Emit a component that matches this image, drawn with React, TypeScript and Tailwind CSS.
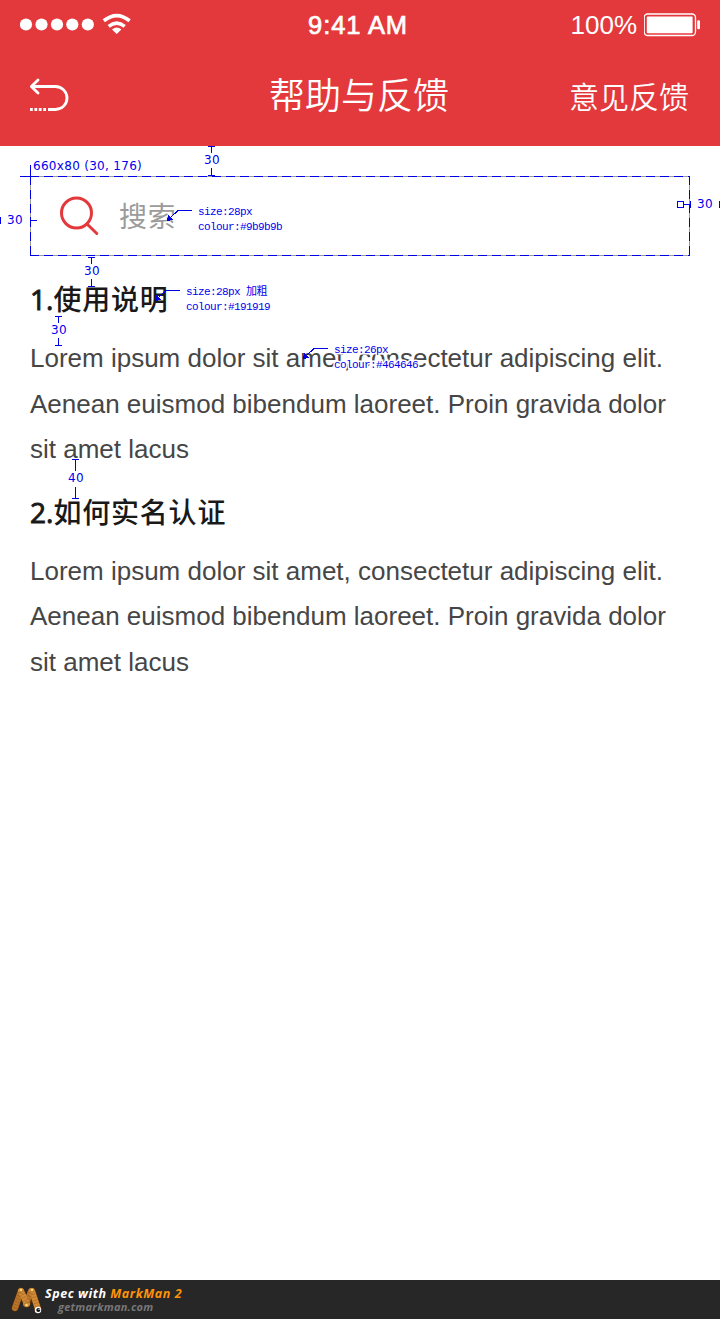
import type { ReactNode } from "react";

const CJK = "font-['Open_Sans','Noto_Sans_CJK_SC',sans-serif]";

function Dim({ x, y, children }: { x: number; y: number; children: ReactNode }) {
  return (
    <span
      className="absolute whitespace-nowrap font-['DejaVu_Sans',sans-serif] text-[12px] leading-[14px] tracking-[0.3px] text-[#0000f0]"
      style={{ left: x, top: y }}
    >
      {children}
    </span>
  );
}

function Note({ x, y, lines }: { x: number; y: number; lines: string[] }) {
  return (
    <div
      className="absolute whitespace-pre font-['Liberation_Mono','Noto_Sans_CJK_SC',monospace] text-[11px] leading-[15px] tracking-[-0.6px] text-[#0000f0] [paint-order:stroke] [-webkit-text-stroke:3px_#fff]"
      style={{ left: x, top: y }}
    >
      {lines.map((line) => (
        <div key={line}>{line}</div>
      ))}
    </div>
  );
}

function StatusBar() {
  return (
    <div className="flex h-12 items-center pt-0.5">
      <div className="flex flex-1 items-center pl-5">
        <svg width="112" height="24" viewBox="0 0 112 24" fill="#fff">
          <circle cx="6" cy="11.5" r="6.1" />
          <circle cx="21.5" cy="11.5" r="6.1" />
          <circle cx="37" cy="11.5" r="6.1" />
          <circle cx="52.3" cy="11.5" r="6.1" />
          <circle cx="67.8" cy="11.5" r="6.1" />
          <path d="M83.8 7.8Q96.7-2.5 109.6 7.8" fill="none" stroke="#fff" strokeWidth="3.7" />
          <path d="M88.7 13.3Q96.7 6.9 104.7 13.3" fill="none" stroke="#fff" strokeWidth="3.5" />
          <path d="M92 16.6Q96.7 12.6 101.4 16.6L96.7 21Z" />
        </svg>
      </div>
      <span className="-mt-px -translate-x-[2px] font-['Liberation_Sans',sans-serif] text-[25.5px] leading-6 tracking-[0.9px] text-white [-webkit-text-stroke:0.7px_#fff]">
        9:41 AM
      </span>
      <div className="flex flex-1 items-center justify-end gap-[7px] pr-5">
        <span className="font-['Liberation_Sans',sans-serif] text-[26px] leading-6 text-white">100%</span>
        <svg width="56" height="24" viewBox="0 0 56 24" fill="#fff">
          <rect x="0.2" y="1" width="51.3" height="21.5" rx="3.5" fill="none" stroke="#fff" strokeWidth="1.3" />
          <rect x="2.8" y="3.4" width="45.8" height="16.8" rx="1" />
          <rect x="53.2" y="7.3" width="2.8" height="9" rx="1.2" />
        </svg>
      </div>
    </div>
  );
}

function NavBar() {
  return (
    <div className="flex h-24 items-center px-[30px] text-white">
      <div className="flex-1">
        <svg className="-mt-0.5" width="39" height="34" viewBox="0 0 39 34" fill="none" stroke="#fff" strokeWidth="2.8">
          <path d="M8 2L1.4 8.5L8 15" strokeLinecap="round" strokeLinejoin="round" />
          <path d="M2 8.5H25.5A11.4 11.4 0 0 1 25.5 31.5H18" />
          <path d="M0 31.5H17" strokeDasharray="2.8 1.6" />
        </svg>
      </div>
      <h1 className={`${CJK} -translate-x-px text-[36px] font-[350] leading-[54px]`}>帮助与反馈</h1>
      <span className={`${CJK} flex-1 -translate-x-px text-right text-[30px] font-[350] leading-[45px]`}>意见反馈</span>
    </div>
  );
}

function Section({ title, className }: { title: string; className: string }) {
  return (
    <section className={className}>
      <h2 className={`${CJK} text-[28px] font-medium leading-[42px] tracking-[0.6px] text-[#191919]`}>
        <span className="tracking-normal [-webkit-text-stroke:0.9px_#191919]">{title.slice(0, 2)}</span>
        <span className="tracking-[0.8px]">{title.slice(2)}</span>
      </h2>
      <p className="mt-4 whitespace-nowrap font-['Liberation_Sans',sans-serif] text-[26px] leading-[45.5px] text-[#464646]">
        Lorem ipsum dolor sit amet, consectetur adipiscing elit.
        <br />
        Aenean euismod bibendum laoreet. Proin gravida dolor
        <br />
        sit amet lacus
      </p>
    </section>
  );
}

function Annotations() {
  return (
    <div className="pointer-events-none absolute inset-0 overflow-hidden">
      <svg className="absolute left-0 top-0" width="720" height="520" fill="none" stroke="#0000e6" shapeRendering="crispEdges">
        <path d="M20 176.5H30M30.5 165V176" />
        <path d="M30 176.5H690M30 255.5H690" strokeDasharray="9 5" />
        <path d="M30.5 176V256M689.5 176V256" strokeDasharray="9 5" />
        <path d="M208 146.5H215M211.5 146V153M211.5 168V176M208 175.5H215" />
        <path d="M88 257.5H95M91.5 257V264M91.5 279V287M88 286.5H95" />
        <path d="M55 316.5H62M58.5 316V323M58.5 338V346M55 345.5H62" />
        <path d="M72 459.5H79M75.5 459V471M75.5 487V499M72 498.5H79" />
        <path d="M0.5 217V224M30.5 217V224M30 220.5H37" />
        <path d="M677.5 201.5H683.5V207.5H677.5ZM684 204.5H691M690.5 201V208M719.5 201V208" />
        <path d="M192 210.5H178L170 218M180 290.5H166L158 298M328 348.5H314L306 356" />
        <path d="M167 221L168 215L173 220ZM155 301L156 295L161 300ZM303 359L304 353L309 358Z" fill="#0000e6" stroke="none" />
      </svg>
      <Dim x={33} y={159}>660x80 (30, 176)</Dim>
      <Dim x={204} y={153}>30</Dim>
      <Dim x={84} y={264}>30</Dim>
      <Dim x={51} y={323}>30</Dim>
      <Dim x={68} y={471}>40</Dim>
      <Dim x={7} y={213}>30</Dim>
      <Dim x={697} y={197}>30</Dim>
      <Note x={198} y={205} lines={["size:28px", "colour:#9b9b9b"]} />
      <Note x={186} y={285} lines={["size:28px 加粗", "colour:#191919"]} />
      <Note x={334} y={343} lines={["size:26px", "colour:#464646"]} />
    </div>
  );
}

function Footer() {
  return (
    <footer className="flex h-[39px] items-start bg-[#272727] pl-[11px] font-['Open_Sans',sans-serif] font-bold italic">
      <svg className="mt-[6px]" width="34" height="30" viewBox="0 0 34 30" fill="none" strokeLinecap="round">
        <path d="M4 22L10 5L16 18L21 5L27 23" stroke="#5d3208" strokeWidth="7" strokeLinejoin="round" />
        <path d="M4 22L10 5" stroke="#b8732a" strokeWidth="6" />
        <path d="M20 5L15 18" stroke="#b8732a" strokeWidth="6" />
        <path d="M10 5L16 18M21 5L27 23" stroke="#d08a38" strokeWidth="6" />
        <path d="M4 22L10 5L16 18L21 5L27 23" stroke="#8a5216" strokeWidth="5" strokeLinecap="butt" strokeDasharray="0.5 2.6" strokeOpacity="0.7" />
        <circle cx="10" cy="4" r="1.2" fill="#ffdf80" />
        <circle cx="21" cy="4" r="1.2" fill="#ffdf80" />
        <circle cx="15.5" cy="19" r="1.2" fill="#ffdf80" />
        <circle cx="27" cy="24" r="3.2" fill="#fff" />
        <circle cx="27.3" cy="24" r="2" fill="#111" />
        <circle cx="28" cy="23.4" r="0.6" fill="#fff" />
      </svg>
      <div className="mt-[6px]">
        <div className="text-[12.5px] leading-4 tracking-[0.55px] text-white">
          Spec with <span className="text-[#ff9208]">MarkMan 2</span>
        </div>
        <div className="pl-[13px] text-[11px] leading-[10px] tracking-[0.25px] text-[#777]">getmarkman.com</div>
      </div>
    </footer>
  );
}

export default function App() {
  return (
    <div className="relative flex h-[1319px] w-[720px] flex-col bg-white">
      <header className="h-[146px] bg-[#e4393c]">
        <StatusBar />
        <NavBar />
      </header>
      <main className="flex-1 px-[30px] pt-[30px]">
        <div className="flex h-20 items-center gap-[19px] border border-[#9b9b9b] pl-[29px]">
          <svg width="40" height="40" viewBox="0 0 40 40" fill="none" stroke="#e4393c" strokeWidth="3">
            <circle cx="16.5" cy="17" r="15" />
            <path d="M27 28L36.8 37.5" strokeLinecap="round" />
          </svg>
          <span className={`${CJK} text-[28px] leading-[42px] tracking-[0.8px] text-[#9b9b9b]`}>搜索</span>
        </div>
        <Section className="mt-[22px]" title="1.使用说明" />
        <Section className="mt-[18px]" title="2.如何实名认证" />
      </main>
      <Footer />
      <Annotations />
    </div>
  );
}
